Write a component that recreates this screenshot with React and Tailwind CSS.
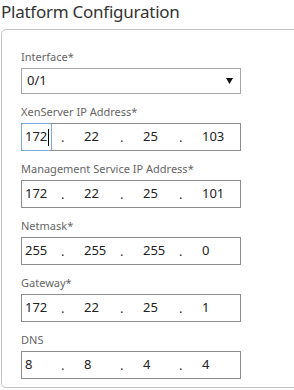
import React from "react";

function IpField({ label, parts, focused }) {
  return (
    <div className="flex flex-col">
      <div className="h-[16px] text-[11px] leading-[16px] text-[#666] mb-[3px] whitespace-nowrap">{label}</div>
      <div className="flex h-[28px] w-[220px] border border-[#8c8c8c] bg-white">
        {parts.map((p, i) => (
          <React.Fragment key={i}>
            {i === 0 && focused ? (
              <div className="relative w-[31px] -ml-[1px] -my-[1px] border border-[#7aaae0] rounded-[2px] pl-[3px] flex items-center text-[13px] text-[#222]">
                <span>{p}</span>
                <span className="w-[1px] h-[17px] bg-black ml-[1px]" />
              </div>
            ) : (
              <div className="w-[30px] pl-[3px] flex items-center text-[13px] text-[#222]">{p}</div>
            )}
            {i < 3 && (
              <div className="w-[29px] pl-[9px] flex items-center text-[13px] text-[#333]">
                <span className="relative top-[1px]">.</span>
              </div>
            )}
          </React.Fragment>
        ))}
      </div>
    </div>
  );
}

export default function App() {
  return (
    <div className="w-[294px] h-[390px] overflow-hidden bg-white font-['Noto_Sans',sans-serif]">
      <div className="h-[29px] pl-[1px] text-[17px] tracking-[-0.25px] leading-[24px] text-[#333] whitespace-nowrap">
        Platform Configuration
      </div>
      <div className="ml-[1px] w-[320px] h-[359px] border border-[#c4c4c4] rounded-[5px] pl-[19px] pt-[19px] flex flex-col gap-[10px]">
        <div className="flex flex-col">
          <div className="h-[16px] text-[11px] leading-[16px] text-[#666] mb-[3px]">Interface*</div>
          <div className="flex items-center justify-between h-[26px] w-[220px] border border-[#a6a6a6] pl-[5px] pr-[7px] text-[13px] text-[#222]">
            <span>0/1</span>
            <svg width="7" height="6" viewBox="0 0 7 6"><path d="M0 0 H7 L3.5 6 Z" fill="#111" /></svg>
          </div>
        </div>
        <IpField label="XenServer IP Address*" parts={["172", "22", "25", "103"]} focused />
        <IpField label="Management Service IP Address*" parts={["172", "22", "25", "101"]} />
        <IpField label="Netmask*" parts={["255", "255", "255", "0"]} />
        <IpField label="Gateway*" parts={["172", "22", "25", "1"]} />
        <IpField label="DNS" parts={["8", "8", "4", "4"]} />
      </div>
    </div>
  );
}
